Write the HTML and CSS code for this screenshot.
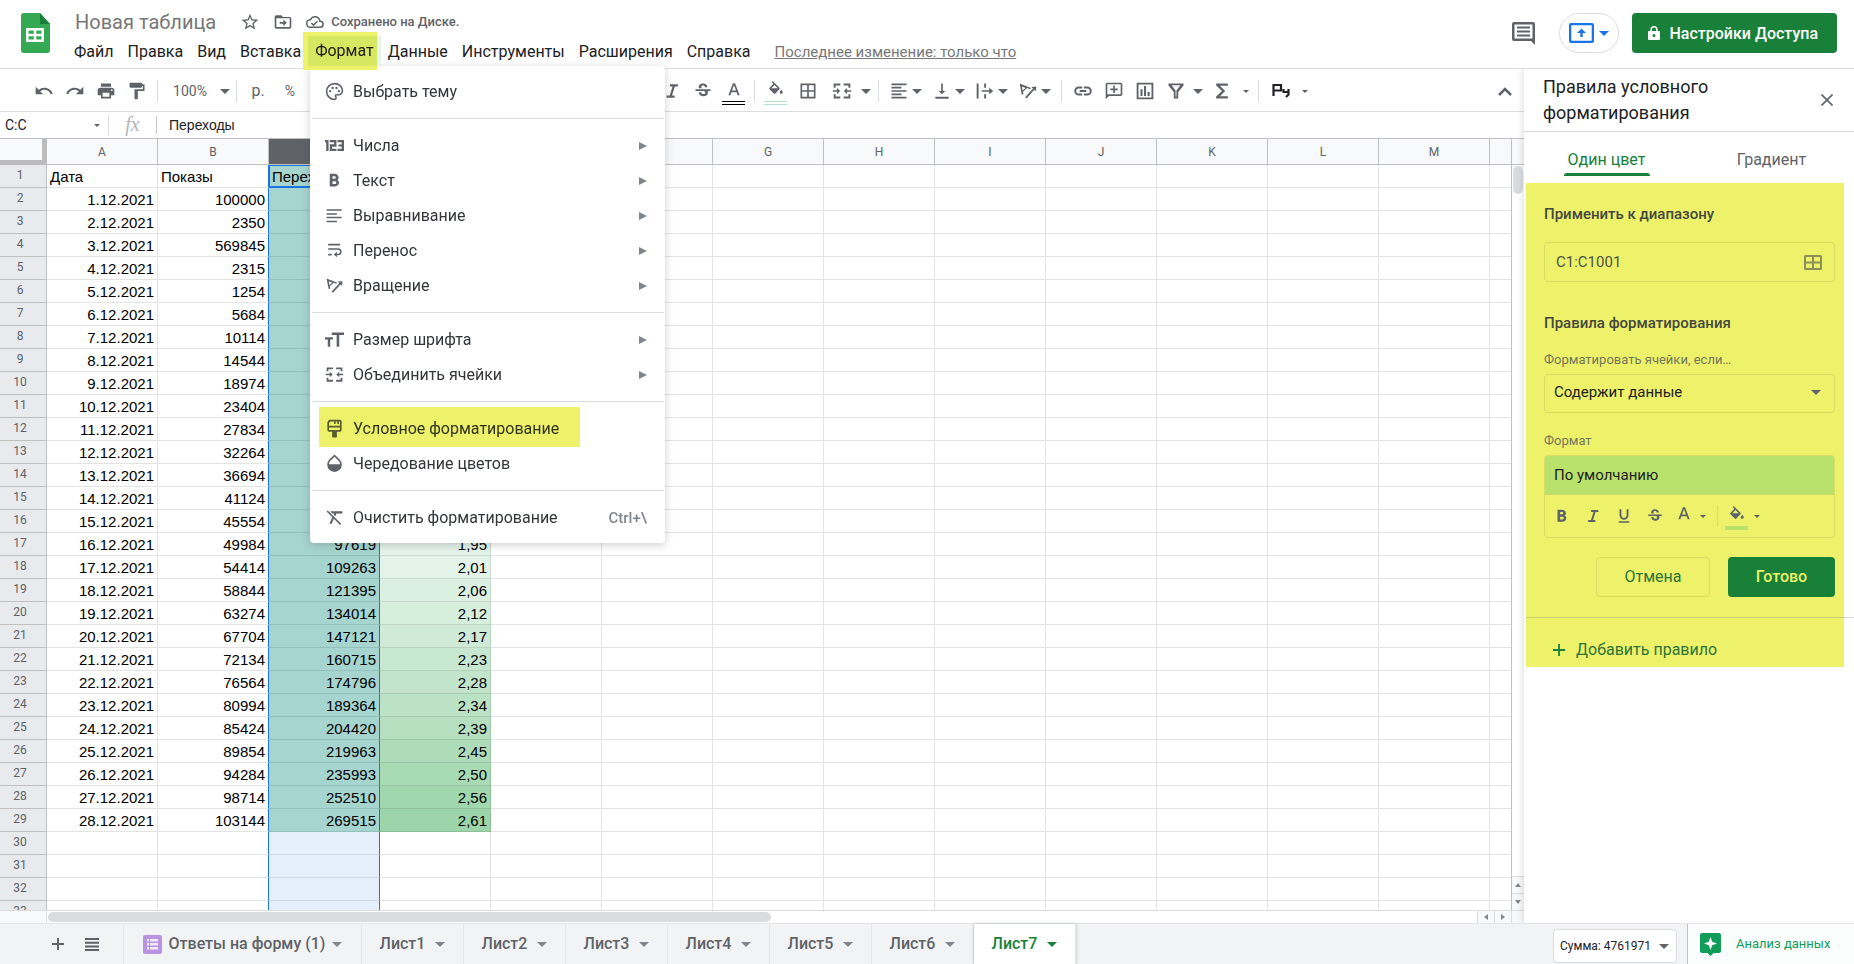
FILE: index.html
```
<!DOCTYPE html>
<html lang="ru">
<head>
<meta charset="utf-8">
<title>Новая таблица</title>
<link rel="stylesheet" href="styles.css">
</head>
<body>
<svg class="sprite" aria-hidden="true">
  <symbol id="caret" viewBox="0 0 10 5"><path d="M0 0h10L5 5z"/></symbol>
  <symbol id="undo" viewBox="0 0 24 24"><path d="M12.500 8c-2.650 0-5.050 1-6.900 2.600L2 7v9h9l-3.620-3.620c1.390-1.160 3.160-1.880 5.120-1.880 3.540 0 6.550 2.310 7.600 5.500l2.370-.78C21.080 11.030 17.150 8 12.500 8z"/></symbol>
  <symbol id="redo" viewBox="0 0 24 24"><path d="M18.400 10.600C16.550 9 14.150 8 11.500 8c-4.650 0-8.580 3.030-9.970 7.220L3.900 16c1.050-3.190 4.060-5.500 7.600-5.500 1.950 0 3.730.72 5.120 1.880L13 16h9V7l-3.600 3.600z"/></symbol>
  <symbol id="print" viewBox="0 0 24 24"><path d="M19 8H5c-1.660 0-3 1.340-3 3v6h4v4h12v-4h4v-6c0-1.660-1.340-3-3-3zm-3 11H8v-5h8v5zm3-7a1 1 0 1 1 0-2 1 1 0 0 1 0 2zM18 3H6v4h12V3z"/></symbol>
  <symbol id="roller" viewBox="0 0 24 24"><path d="M18 4V3c0-.55-.45-1-1-1H4c-.55 0-1 .45-1 1v4c0 .55.45 1 1 1h13c.55 0 1-.45 1-1V6h1v4H9v11c0 .55.45 1 1 1h2c.55 0 1-.45 1-1v-9h8V4h-3z"/></symbol>
  <symbol id="bold" viewBox="0 0 24 24"><path d="M15.600 11.300c.97-.67 1.650-1.770 1.650-2.790C17.250 5.500 14.900 3.500 12 3.500H6v16h6.700c2.700 0 5-2 5-4.600 0-1.600-.8-2.900-2.100-3.600zM9.500 6.500h2.600a1.600 1.600 0 0 1 0 3.200H9.500zM12.600 16.500H9.500V13h3.100a1.750 1.750 0 0 1 0 3.500z"/></symbol>
  <symbol id="italic" viewBox="0 0 24 24"><path d="M9.500 4v2.600h3.200L9.300 17.400H5.500V20h9.600v-2.600h-3.100l3.400-10.800h3.700V4z"/></symbol>
  <symbol id="underline" viewBox="0 0 24 24"><path d="M12 17c3.310 0 6-2.690 6-6V3h-2.500v8c0 1.930-1.570 3.500-3.500 3.500S8.500 12.930 8.500 11V3H6v8c0 3.310 2.690 6 6 6zm-7 2v2h14v-2H5z"/></symbol>
  <symbol id="strike" viewBox="0 0 24 24"><path d="M7.240 8.750c-.26-.48-.39-1.030-.39-1.670 0-1.840 1.650-4.080 5.250-4.080 3.100 0 5.160 1.870 5.160 4.490h-3.010c0-1.350-.8-2.130-2.170-2.130-1.350 0-2.180.7-2.180 1.600 0 .9.600 1.350 1.900 1.750H7.390l-.15.040zM21 12v-2H3v2h9.620c1.500.5 2.250 1 2.250 2.050 0 1-.85 1.650-2.300 1.650-1.700 0-2.560-.8-2.560-2.300H7c0 3.300 2.600 4.800 5.500 4.800 3.200 0 5.400-1.500 5.400-4.200 0-.8-.2-1.450-.4-2H21z"/></symbol>
  <symbol id="letter-a" viewBox="0 0 24 24"><path d="M10.600 3 4.500 19h2.600l1.400-3.900h7L16.900 19h2.600L13.400 3zM9.300 12.800 12 5.500l2.700 7.300z"/></symbol>
  <symbol id="fill" viewBox="0 0 24 24"><path d="M16.560 8.940 7.620 0 6.210 1.410l2.380 2.380-5.150 5.150c-.59.590-.59 1.540 0 2.120l5.500 5.500c.29.290.68.440 1.060.44s.77-.15 1.060-.44l5.500-5.500c.59-.58.59-1.530 0-2.120zM5.800 9.500 10 5.210 14.200 9.500zM19 11.500s-2 2.170-2 3.500a2 2 0 0 0 4 0c0-1.330-2-3.500-2-3.500z"/></symbol>
  <symbol id="borders" viewBox="0 0 24 24"><path d="M3 3v18h18V3zm8 16H5v-6h6zm0-8H5V5h6zm8 8h-6v-6h6zm0-8h-6V5h6z"/></symbol>
  <symbol id="merge" viewBox="0 0 24 24"><path d="M2 3h8v2.300H4.300V8H2zM14 3h8v5h-2.300V5.300H14zM2 16h2.300v2.700H10V21H2zM19.700 16H22v5h-8v-2.300h5.700zM1 11h5V8.500l3.800 3.500L6 15.500V13H1zM23 11h-5V8.500L14.200 12l3.800 3.500V13h5z"/></symbol>
  <symbol id="align" viewBox="0 0 24 24"><path d="M3 3h18v2H3zM3 7h12v2H3zM3 11h18v2H3zM3 15h12v2H3zM3 19h18v2H3z"/></symbol>
  <symbol id="align4" viewBox="0 0 24 24"><path d="M2 4h19v2H2zM2 9h13v2H2zM2 13.500h19v2H2zM2 18.500h13v2H2z"/></symbol>
  <symbol id="valign" viewBox="0 0 24 24"><path d="M16 12h-3V3h-2v9H8l4 4zM4 19v2.200h16V19z"/></symbol>
  <symbol id="overflow" viewBox="0 0 24 24"><path d="M2 3h2.300v18H2zM11 3h2.300v5H11zM11 16h2.300v5H11zM8 11h9V8l5 4-5 4v-3H8z"/></symbol>
  <symbol id="rotate" viewBox="0 0 24 24"><path d="m2 3 2.600 13.500 2-.5-.6-3.200 5-4.400 3 1.500 1.600-1.400zm2.800 3.500L9 8.400l-3.400 3zM22 6.500l-6 .6 2 1.900L8.500 19.500l1.600 1.500 9.500-10.400 1.900 1.800z"/></symbol>
  <symbol id="wrap" viewBox="0 0 24 24"><path d="M4 3.500h15v2.200H4zM4 9h12.500a4 4 0 0 1 0 9H15v2.500L11 17l4-3.500V16h1.500a2 2 0 0 0 0-5H4zM4 16h4.500v2.200H4z"/></symbol>
  <symbol id="link" viewBox="0 0 24 24"><path d="M3.900 12c0-1.710 1.390-3.100 3.100-3.100h4V6.500H7a5.500 5.500 0 0 0 0 11h4v-2.400H7A3.100 3.100 0 0 1 3.900 12zM8 13.100h8v-2.200H8zM17 6.500h-4v2.400h4a3.100 3.100 0 0 1 0 6.200h-4v2.400h4a5.500 5.500 0 0 0 0-11z"/></symbol>
  <symbol id="comment" viewBox="0 0 24 24"><path d="M20 2H4a2 2 0 0 0-2 2v18l4-4h14a2 2 0 0 0 2-2V4a2 2 0 0 0-2-2zm0 14H4V4h16zM11 14.500h2V11h3.500V9H13V5.500h-2V9H7.500v2H11z"/></symbol>
  <symbol id="chart" viewBox="0 0 24 24"><path d="M2 2v20h20V2zm17.800 17.800H4.200V4.200h15.600zM6.500 10H9v8H6.500zM10.800 6h2.500v12h-2.500zM15.100 13h2.500v5h-2.500z"/></symbol>
  <symbol id="filter" viewBox="0 0 24 24"><path d="M3 3v2.300l6.300 8V21h5.400v-7.700l6.300-8V3zm3.800 2.200h10.400L12.500 11.300V18.800h-1v-7.500z"/></symbol>
  <symbol id="sigma" viewBox="0 0 24 24"><path d="M19 3H5v2.300L12 12l-7 6.700V21h14v-2.800H9.500L15.800 12 9.500 5.800H19z"/></symbol>
  <symbol id="star" viewBox="0 0 24 24"><path d="m22 9.240-7.190-.62L12 2 9.190 8.630 2 9.240l5.460 4.730L5.820 21 12 17.270 18.180 21l-1.630-7.030zM12 15.400l-3.760 2.270 1-4.280-3.320-2.880 4.380-.38L12 6.100l1.710 4.040 4.380.38-3.320 2.880 1 4.280z"/></symbol>
  <symbol id="folder" viewBox="0 0 24 24"><path d="M20 6h-8l-2-2H4a2 2 0 0 0-2 2v12a2 2 0 0 0 2 2h16a2 2 0 0 0 2-2V8a2 2 0 0 0-2-2zm0 12H4V7.500h16zM12.500 17l4-4-4-4v3H8v2h4.500z"/></symbol>
  <symbol id="cloud" viewBox="0 0 24 24"><path d="M19.350 10.040A7.490 7.490 0 0 0 5.350 8.040 6 6 0 0 0 6 20h13a5 5 0 0 0 .35-9.960zM19 18H6a4 4 0 0 1-.42-7.980l1.070-.11.500-.95a5.500 5.500 0 0 1 10.240 1.470l.3 1.500 1.530.11A3 3 0 0 1 19 18zm-9-3.180-2.090-2.090L6.500 14.140 10 17.640l6.010-6.010-1.410-1.410z"/></symbol>
  <symbol id="palette" viewBox="0 0 24 24"><path d="M12 1a11 11 0 0 0 0 22c1.700 0 3-1.300 3-3 0-.8-.3-1.400-.7-2-.1-.1-.2-.2-.2-.4 0-.3.300-.6.600-.6H17c3.300 0 6-2.700 6-6C23 5.500 18.100 1 12 1zm5 14h-2.300a2.600 2.600 0 0 0-1.900 4.300c.1.200.2.400.2.700 0 .5-.4 1-1 1a9 9 0 0 1 0-18c5 0 9 3.600 9 8 0 2.200-1.800 4-4 4zM8 11.500a1.500 1.500 0 1 1-3 0 1.500 1.500 0 0 1 3 0zM11 7.500a1.500 1.500 0 1 1-3 0 1.500 1.500 0 0 1 3 0zM16 7.500a1.500 1.500 0 1 1-3 0 1.500 1.500 0 0 1 3 0zM19 11.500a1.500 1.500 0 1 1-3 0 1.500 1.500 0 0 1 3 0z"/></symbol>
  <symbol id="digits" viewBox="0 0 24 24"><path d="M0 5h4.500v14H1.500V8H0zM6 5h8.500v8.500H9V16h5.500v3H6v-8.500h5.500V8H6zM15.800 5H24v14h-8.200v-3H21v-2.700h-4v-2.600h4V8h-5.200z"/></symbol>
  <symbol id="size" viewBox="0 0 24 24"><path d="M8.500 3H24v3.200h-6V21h-3.300V6.200H8.500zM0 9h10v3H6.600v9H3.500v-9H0z"/></symbol>
  <symbol id="brush" viewBox="0 0 24 24"><path d="M5 1h14a2 2 0 0 1 2 2v11a2 2 0 0 1-2 2h-4v6a1.500 1.500 0 0 1-1.500 1.500h-3A1.500 1.500 0 0 1 9 22v-6H5a2 2 0 0 1-2-2V4zm.2 3.800v3.700h13.600V3.200h-1.300v3h-2v-3h-2v3h-2v-3H6.800zm0 5.900v3.100h13.600v-3.100z"/></symbol>
  <symbol id="drop" viewBox="0 0 24 24"><path d="M18.500 7 12 .5 5.500 7a9.200 9.200 0 1 0 13 0zM5 13c0-1.900.7-3.100 2-4.400l5-5 5 5c1.300 1.300 2 2.500 2 4.400z"/></symbol>
  <symbol id="clear" viewBox="0 0 24 24"><path d="M3.500 3 2 4.500l7.200 7.200L5.500 20h3l2.600-6.300L19 21.500l1.500-1.500zM6.500 4v.2L9.300 7h2.200l-.6 1.600 2 2L14.500 7H22V4z"/></symbol>
</svg>

<header class="topbar">
  <svg class="logo" viewBox="0 0 29 40" aria-hidden="true"><path fill="#34a853" d="M3 0h16l10 11v26a3 3 0 0 1-3 3H3a3 3 0 0 1-3-3V3a3 3 0 0 1 3-3z"/><path fill="#188038" d="M19 0l10 11H19z"/><path fill="#fff" d="M5 15h18v14H5zm2.500 2.500v3.300h5.300v-3.300zm7.800 0v3.300h5.200v-3.300zm-7.800 5.700v3.300h5.300v-3.300zm7.800 0v3.300h5.200v-3.300z"/></svg>
  <div class="doc">
    <div class="doc-title">
      <h1>Новая таблица</h1>
      <button aria-label="Пометить"><svg class="icon"><use href="#star"/></svg></button>
      <button aria-label="Переместить"><svg class="icon"><use href="#folder"/></svg></button>
      <span class="saved"><svg class="icon"><use href="#cloud"/></svg>Сохранено на Диске.</span>
    </div>
    <nav class="menubar">
      <button>Файл</button><button>Правка</button><button>Вид</button><button>Вставка</button><button class="open">Формат</button><button>Данные</button><button>Инструменты</button><button>Расширения</button><button>Справка</button>
      <a href="#history">Последнее изменение: только что</a>
    </nav>
  </div>
  <div class="actions">
    <button aria-label="История комментариев"><svg width="23" height="23" viewBox="0 0 23 23" fill="#5f6368"><path d="M2 0h19a2 2 0 0 1 2 2v21l-4-4H2a2 2 0 0 1-2-2V2a2 2 0 0 1 2-2zm.5 2.500v14h18v-14zM5 4.500h13v2H5zM5 8.500h13v2H5zM5 12.500h13v2H5z"/></svg></button>
    <button class="present" aria-label="Презентация"><svg width="25" height="20" viewBox="0 0 25 20" fill="#1a73e8"><path d="M2 0h21a2 2 0 0 1 2 2v16a2 2 0 0 1-2 2H2a2 2 0 0 1-2-2V2a2 2 0 0 1 2-2zm.3 2.300v15.400h20.400V2.300zM12.500 5.500l4.500 4.500h-3.300v4h-2.400v-4H8z"/></svg><svg class="caret blue"><use href="#caret"/></svg></button>
    <button class="share"><svg width="12" height="14" viewBox="0 0 12 14" fill="#fff"><path d="M6 0a3.600 3.600 0 0 1 3.600 3.600V5H11a1 1 0 0 1 1 1v7a1 1 0 0 1-1 1H1a1 1 0 0 1-1-1V6a1 1 0 0 1 1-1h1.400V3.600A3.600 3.600 0 0 1 6 0zm0 1.500c-1.200 0-2.100.9-2.100 2.100V5h4.200V3.600c0-1.200-.9-2.100-2.100-2.100zM6 8a1.500 1.500 0 1 0 0 3 1.500 1.500 0 0 0 0-3z"/></svg>Настройки Доступа</button>
  </div>
</header>

<div class="workspace">
  <main class="editor">
    <div class="toolbar">
      <button aria-label="Отменить"><svg class="icon"><use href="#undo"/></svg></button>
      <button aria-label="Повторить"><svg class="icon"><use href="#redo"/></svg></button>
      <button aria-label="Печать"><svg class="icon"><use href="#print"/></svg></button>
      <button aria-label="Копировать форматирование"><svg class="icon"><use href="#roller"/></svg></button>
      <i class="sep"></i>
      <button class="zoom">100%<svg class="caret"><use href="#caret"/></svg></button>
      <i class="sep"></i>
      <button class="unit">р.</button>
      <button class="unit percent">%</button>
      <span class="covered"></span>
      <button aria-label="Курсив"><svg class="icon"><use href="#italic"/></svg></button>
      <button aria-label="Зачеркнутый"><svg class="icon"><use href="#strike"/></svg></button>
      <button class="colored" aria-label="Цвет текста"><svg class="icon"><use href="#letter-a"/></svg><i class="swatch black"></i></button>
      <i class="sep"></i>
      <button class="colored" aria-label="Цвет заливки"><svg class="icon"><use href="#fill"/></svg><i class="swatch mint"></i></button>
      <button class="roomy" aria-label="Границы"><svg class="icon"><use href="#borders"/></svg></button>
      <button class="roomy" aria-label="Объединить"><svg class="icon"><use href="#merge"/></svg></button>
      <button class="drop" aria-label="Тип объединения"><svg class="caret"><use href="#caret"/></svg></button>
      <i class="sep"></i>
      <button class="pair" aria-label="По горизонтали"><svg class="icon"><use href="#align"/></svg><svg class="caret"><use href="#caret"/></svg></button>
      <button class="pair" aria-label="По вертикали"><svg class="icon"><use href="#valign"/></svg><svg class="caret"><use href="#caret"/></svg></button>
      <button class="pair" aria-label="Перенос текста"><svg class="icon"><use href="#overflow"/></svg><svg class="caret"><use href="#caret"/></svg></button>
      <button class="pair" aria-label="Поворот текста"><svg class="icon"><use href="#rotate"/></svg><svg class="caret"><use href="#caret"/></svg></button>
      <i class="sep"></i>
      <button aria-label="Ссылка"><svg class="icon"><use href="#link"/></svg></button>
      <button aria-label="Комментарий"><svg class="icon"><use href="#comment"/></svg></button>
      <button aria-label="Диаграмма"><svg class="icon"><use href="#chart"/></svg></button>
      <button aria-label="Фильтр"><svg class="icon"><use href="#filter"/></svg></button>
      <button class="drop" aria-label="Фильтры"><svg class="caret"><use href="#caret"/></svg></button>
      <button class="roomy" aria-label="Функции"><svg class="icon"><use href="#sigma"/></svg></button>
      <button class="drop" aria-label="Список функций"><svg class="caret small"><use href="#caret"/></svg></button>
      <i class="sep"></i>
      <button class="roomy" aria-label="Способ ввода"><svg width="18" height="16" viewBox="0 0 18 16" fill="none" stroke="#202124" stroke-width="2.200"><path d="M1.500 13V2h7.500v5.500H1.500M11.500 6v3h5M16.500 6v5.500l-2.500 2.500"/></svg></button>
      <button class="drop" aria-label="Язык ввода"><svg class="caret small"><use href="#caret"/></svg></button>
      <button class="collapse" aria-label="Скрыть меню"><svg width="14" height="9" viewBox="0 0 14 9" fill="none" stroke="#5f6368" stroke-width="2.500"><path d="M1 8l6-6 6 6"/></svg></button>
    </div>
    <div class="formula">
      <button class="namebox">C:C<svg class="caret small"><use href="#caret"/></svg></button>
      <span class="fx">fx</span>
      <input aria-label="Формула" value="Переходы">
    </div>
    <div class="sheet">
      <div class="viewport"><table class="grid" id="grid"></table></div>
      <div class="vscroll">
        <i class="cap"></i><div class="track"><i class="thumb"></i></div>
        <button aria-label="Вверх"><svg width="6" height="4"><path d="M0 4h6L3 0z"/></svg></button>
        <button aria-label="Вниз"><svg width="6" height="4"><path d="M0 0h6L3 4z"/></svg></button>
      </div>
      <div class="hscroll">
        <i class="cap"></i><div class="track"><i class="thumb"></i></div>
        <button aria-label="Влево"><svg width="4" height="6"><path d="M4 0v6L0 3z"/></svg></button>
        <button aria-label="Вправо"><svg width="4" height="6"><path d="M0 0v6l4-3z"/></svg></button>
      </div>
      <i class="corner"></i>
    </div>
  </main>

  <aside class="panel">
    <div class="panel-head">
      <h2>Правила условного форматирования</h2>
      <button aria-label="Закрыть"><svg width="12" height="12" viewBox="0 0 12 12" stroke="#5f6368" stroke-width="1.600"><path d="M.5.500l11 11M11.500.500l-11 11"/></svg></button>
    </div>
    <div class="panel-tabs">
      <button class="active">Один цвет</button>
      <button>Градиент</button>
    </div>
    <form class="rules">
      <div class="fields">
        <label class="heading" for="range">Применить к диапазону</label>
        <div class="range"><input id="range" value="C1:C1001"><svg width="18" height="15" viewBox="0 0 18 15"><path fill="#8d905a" d="M1.500 0h15A1.500 1.500 0 0 1 18 1.500v12a1.500 1.500 0 0 1-1.500 1.500h-15A1.500 1.500 0 0 1 0 13.500v-12A1.500 1.500 0 0 1 1.500 0zM2 2v4.500h6V2zm8 0v4.500h6V2zM2 8.500V13h6V8.500zm8 0V13h6V8.500z"/></svg></div>
        <h3 class="heading">Правила форматирования</h3>
        <label class="caption" for="condition">Форматировать ячейки, если…</label>
        <div class="condition"><select id="condition"><option>Содержит данные</option></select><svg class="caret"><use href="#caret"/></svg></div>
        <span class="caption format-caption">Формат</span>
        <div class="format">
          <button type="button" class="preview">По умолчанию</button>
          <div class="format-tools">
            <button type="button" aria-label="Полужирный"><svg class="icon"><use href="#bold"/></svg></button>
            <button type="button" aria-label="Курсив"><svg class="icon"><use href="#italic"/></svg></button>
            <button type="button" aria-label="Подчеркнутый"><svg class="icon"><use href="#underline"/></svg></button>
            <button type="button" aria-label="Зачеркнутый"><svg class="icon"><use href="#strike"/></svg></button>
            <button type="button" class="lifted" aria-label="Цвет текста"><svg class="icon"><use href="#letter-a"/></svg></button>
            <svg class="caret small"><use href="#caret"/></svg>
            <i class="sep"></i>
            <button type="button" class="colored" aria-label="Цвет заливки"><svg class="icon"><use href="#fill"/></svg><i class="swatch lime"></i></button>
            <svg class="caret small"><use href="#caret"/></svg>
          </div>
        </div>
        <div class="buttons"><button type="button" class="cancel">Отмена</button><button type="button" class="done">Готово</button></div>
      </div>
      <button type="button" class="add"><svg width="12" height="12" viewBox="0 0 12 12" stroke="#188038" stroke-width="1.800"><path d="M6 0v12M0 6h12"/></svg>Добавить правило</button>
    </form>
  </aside>
</div>

<footer class="tabs">
  <div class="tab-tools">
    <button aria-label="Добавить лист"><svg width="12" height="12" viewBox="0 0 12 12" stroke="#5f6368" stroke-width="2"><path d="M6 0v12M0 6h12"/></svg></button>
    <button aria-label="Все листы"><svg width="14" height="13" viewBox="0 0 14 13" fill="#5f6368"><path d="M0 0h14v2H0zM0 3.700h14v2H0zM0 7.400h14v2H0zM0 11h14v2H0z"/></svg></button>
  </div>
  <button class="tab form-tab"><svg width="19" height="19" viewBox="0 0 19 19"><rect width="19" height="19" rx="2" fill="#b992e2"/><path fill="#f4ecfb" d="M4 4h2v2.500H4zM7 4h8v2.500H7zM4 8h2v2.500H4zM7 8h8v2.500H7zM4 12h2v2.500H4zM7 12h8v2.500H7z"/></svg>Ответы на форму (1)<svg class="caret"><use href="#caret"/></svg></button>
  <button class="tab">Лист1<svg class="caret"><use href="#caret"/></svg></button>
  <button class="tab">Лист2<svg class="caret"><use href="#caret"/></svg></button>
  <button class="tab">Лист3<svg class="caret"><use href="#caret"/></svg></button>
  <button class="tab">Лист4<svg class="caret"><use href="#caret"/></svg></button>
  <button class="tab">Лист5<svg class="caret"><use href="#caret"/></svg></button>
  <button class="tab">Лист6<svg class="caret"><use href="#caret"/></svg></button>
  <button class="tab current">Лист7<svg class="caret"><use href="#caret"/></svg></button>
  <div class="sum"><select aria-label="Итог"><option>Сумма: 4761971</option></select><svg class="caret"><use href="#caret"/></svg></div>
  <button class="explore"><svg width="21" height="23" viewBox="0 0 21 23"><path fill="#0f9d58" d="M2 0h17a2 2 0 0 1 2 2v16a2 2 0 0 1-2 2h-5.500l-3 3-3-3H2a2 2 0 0 1-2-2V2a2 2 0 0 1 2-2z"/><path fill="#fff" d="M10.500 4l1.700 4.800 4.800 1.700-4.800 1.700-1.700 4.800-1.700-4.800L4 10.500l4.800-1.700z"/></svg>Анализ данных</button>
</footer>

<div class="menu" role="menu">
  <button><svg class="icon"><use href="#palette"/></svg>Выбрать тему</button>
  <hr>
  <button><svg class="icon"><use href="#digits"/></svg>Числа<svg class="more" viewBox="0 0 8 8"><path d="M0 0l8 4-8 4z"/></svg></button>
  <button><svg class="icon"><use href="#bold"/></svg>Текст<svg class="more" viewBox="0 0 8 8"><path d="M0 0l8 4-8 4z"/></svg></button>
  <button><svg class="icon"><use href="#align4"/></svg>Выравнивание<svg class="more" viewBox="0 0 8 8"><path d="M0 0l8 4-8 4z"/></svg></button>
  <button><svg class="icon"><use href="#wrap"/></svg>Перенос<svg class="more" viewBox="0 0 8 8"><path d="M0 0l8 4-8 4z"/></svg></button>
  <button><svg class="icon"><use href="#rotate"/></svg>Вращение<svg class="more" viewBox="0 0 8 8"><path d="M0 0l8 4-8 4z"/></svg></button>
  <hr>
  <button><svg class="icon"><use href="#size"/></svg>Размер шрифта<svg class="more" viewBox="0 0 8 8"><path d="M0 0l8 4-8 4z"/></svg></button>
  <button><svg class="icon"><use href="#merge"/></svg>Объединить ячейки<svg class="more" viewBox="0 0 8 8"><path d="M0 0l8 4-8 4z"/></svg></button>
  <hr>
  <button class="marked"><svg class="icon"><use href="#brush"/></svg>Условное форматирование</button>
  <button><svg class="icon"><use href="#drop"/></svg>Чередование цветов</button>
  <hr>
  <button><svg class="icon"><use href="#clear"/></svg>Очистить форматирование<kbd>Ctrl+\</kbd></button>
</div>
<script src="grid.js"></script>
</body>
</html>
```

FILE: styles.css
```
* { box-sizing: border-box; }
body {
  margin: 0;
  height: 100vh;
  display: flex;
  flex-direction: column;
  overflow: hidden;
  position: relative;
  background: #fff;
  color: #202124;
  font: 15px/20px Roboto, "Noto Sans", sans-serif;
}
button, input, select { font: inherit; color: inherit; border: 0; padding: 0; margin: 0; background: none; }
button { display: flex; align-items: center; justify-content: center; white-space: nowrap; flex: none; }
h1, h2, h3 { margin: 0; font-weight: 400; }
svg { flex: none; display: block; }
.sprite { position: absolute; width: 0; height: 0; }
.icon { width: 20px; height: 20px; fill: #5f6368; }
.caret { width: 10px; height: 5px; fill: #5f6368; }
.caret.small { width: 6px; height: 3px; }
.caret.blue { fill: #1a73e8; }
.sep { flex: none; width: 1px; height: 22px; margin: 0 5px; background: #dadce0; }

/* Top bar */
.topbar { flex: none; display: flex; height: 69px; border-bottom: 1px solid #dadce0; }
.logo { width: 29px; height: 40px; margin: 13px 17px 0 21px; }
.doc { padding-top: 7px; }
.doc-title { display: flex; align-items: center; height: 29px; padding-left: 8px; color: #5f6368; }
.doc-title h1 { font-size: 20px; color: #777; margin-right: 24px; }
.doc-title button { margin-right: 13px; }
.saved { display: flex; align-items: center; gap: 7px; font-size: 13px; font-weight: 500; }
.saved .icon { width: 18px; height: 18px; }
.menubar { display: flex; height: 32px; font-size: 16px; }
.menubar button { padding: 0 7px; height: 32px; }
.menubar .open { position: relative; height: 30px; background: #e6f4ea; z-index: 3; }
.menubar .open::after {
  content: "";
  position: absolute;
  inset: -4px 4px -4px -5px;
  background: #eef26b;
  mix-blend-mode: multiply;
}
.menubar a { margin-left: 17px; font-size: 15px; line-height: 32px; color: #777; }
.actions { margin: 13px 17px 0 auto; display: flex; align-items: flex-start; }
.actions > button { height: 40px; }
.present { width: 60px; margin: 0 13px 0 24px; gap: 5px; border: 1px solid #dadce0; border-radius: 20px; }
.share { gap: 10px; padding: 0 19px 0 16px; border-radius: 4px; background: #188038; color: #fff; font: 500 16px Roboto, sans-serif; }

/* Editor */
.workspace { flex: 1; min-height: 0; display: flex; }
.editor { flex: 1; min-width: 0; display: flex; flex-direction: column; }
.toolbar { flex: none; display: flex; align-items: center; height: 43px; padding: 2px 4px 0 28px; border-bottom: 1px solid #dadce0; color: #5f6368; }
.toolbar button { width: 31px; height: 30px; }
.toolbar .zoom { width: 68px; padding-left: 9px; gap: 13px; font-size: 14px; }
.toolbar .unit { width: 32px; font-size: 16px; }
.toolbar .percent { font-size: 14px; }
.covered { flex: none; width: 350px; }
.toolbar .roomy { width: 34px; }
.toolbar .drop { width: 14px; }
.toolbar .pair { width: 43px; gap: 3px; }
.toolbar .collapse { margin-left: auto; }
.colored { flex-direction: column; gap: 2px; padding-top: 3px; }
.colored .icon { width: 18px; height: 18px; }
.swatch { width: 23px; height: 4px; }
.swatch.black { border: solid #000; border-width: 1px 0; }
.swatch.mint { border: solid #b7e1cd; border-width: 1px 0; }
.swatch.lime { background: #b9e26c; }
.formula { flex: none; display: flex; align-items: center; height: 27px; border-bottom: 1px solid #c0c0c0; font-size: 14px; }
.namebox { width: 109px; height: 20px; padding: 0 8px 0 5px; justify-content: space-between; border-right: 1px solid #dadce0; }
.fx { width: 48px; height: 18px; text-align: center; border-right: 1px solid #c8c8c8; color: #b5b5b5; font: italic 20px/16px "Liberation Serif", serif; }
.formula input { flex: 1; padding-left: 12px; font: 14px "Liberation Sans", sans-serif; }

.sheet { flex: 1; min-height: 0; display: grid; grid-template: minmax(0, 1fr) 13px / minmax(0, 1fr) 13px; }
.viewport { overflow: hidden; }
.grid { table-layout: fixed; width: 1823px; border-collapse: separate; border-spacing: 0; font: 15px/16px "Liberation Sans", Arial, sans-serif; color: #000; }
.grid th, .grid td { height: 23px; padding: 0 3px; overflow: hidden; white-space: nowrap; border: solid #e2e3e3; border-width: 0 1px 1px 0; }
.grid th { font: 12px/14px Roboto, sans-serif; color: #5f6368; }
.grid thead th { height: 26px; width: 111px; background: #f8f9fa; border-color: #c0c0c0; }
.grid thead th:first-child { width: 47px; border: solid #bcbcbc; border-width: 0 5px 5px 0; }
.grid thead .selected { background: #5f6368; }
.grid tbody th { background: #e8eaed; border-color: #c0c0c0; padding: 0 6px 2px 0; }
.grid tbody td { text-align: right; padding-top: 2px; }
.grid tbody td.text { text-align: left; }
.grid tbody .before { border-right-color: #1a73e8; }
.grid tbody .picked { background: #e6f0fc; border-color: #1a73e8; border-bottom-color: #cfd9e3; }
.grid tbody .filled { background: #a6d4cf; border-bottom-color: #92c1bc; }
.grid tbody .active { box-shadow: inset 1px 1px #1a73e8, inset 0 -1px #1a73e8; border-bottom-color: #1a73e8; }
.grid tbody .rated { border-color: rgba(0, 0, 0, .1); }
.vscroll { display: flex; flex-direction: column; border-left: 1px solid #c0c0c0; }
.vscroll .cap { height: 26px; background: #f8f9fa; border-bottom: 1px solid #c0c0c0; }
.track { flex: 1; min-width: 0; padding: 1px; }
.thumb { display: block; border-radius: 5px; background: #dadce0; }
.vscroll .thumb { height: 28px; width: 10px; }
.vscroll button { height: 17px; background: #f8f9fa; border-top: 1px solid #dadce0; fill: #80868b; }
.hscroll { display: flex; border-top: 1px solid #dadce0; }
.hscroll .cap { width: 47px; background: #f8f9fa; border-right: 1px solid #dadce0; }
.hscroll .thumb { height: 10px; width: 50.6%; }
.hscroll button { width: 17px; background: #f8f9fa; border-left: 1px solid #dadce0; fill: #80868b; }
.corner { background: #f8f9fa; border: solid #dadce0; border-width: 1px 0 0 1px; }

/* Side panel */
.panel { flex: none; width: 330px; box-shadow: -2px 0 6px rgba(60, 64, 67, .15); z-index: 1; background: #fff; clip-path: inset(0 0 0 -10px); }
.panel-head { display: flex; align-items: center; justify-content: space-between; padding: 5px 21px 5px 19px; border-bottom: 1px solid #dadce0; }
.panel-head h2 { width: 200px; font-size: 18px; line-height: 26px; }
.panel-tabs { display: flex; height: 51px; color: #5f6368; font-size: 16px; }
.panel-tabs button { flex: 1; padding-top: 4px; }
.panel-tabs .active { position: relative; color: #188038; }
.panel-tabs .active::after { content: ""; position: absolute; bottom: 7px; width: 86px; height: 3px; border-radius: 3px 3px 0 0; background: #188038; }
.rules { margin: 0 10px 0 2px; background: #eef26b; }
.fields { margin-right: -10px; padding: 20px 19px 20px 18px; border-bottom: 1px solid rgba(95, 99, 104, .25); }
.heading { display: block; height: 22px; line-height: 22px; font-size: 15px; font-weight: 500; color: #45483f; }
.range { display: flex; align-items: center; height: 40px; margin: 17px 0 30px; padding: 0 12px 0 11px; border: 1px solid #d9dc66; border-radius: 4px; color: #4f5244; }
.range input { flex: 1; min-width: 0; }
.caption { display: block; margin-top: 16px; line-height: 20px; font-size: 13px; color: #74775a; }
.condition, .sum { position: relative; }
.condition { height: 39px; margin-top: 4px; border: 1px solid #d9dc66; border-radius: 4px; }
.condition select { appearance: none; width: 100%; height: 100%; padding: 0 9px 3px; }
.condition .caret { position: absolute; right: 13px; top: 15px; }
.format-caption { margin-top: 18px; }
.format { margin-top: 4px; border: 1px solid #d9dc66; border-radius: 4px; overflow: hidden; }
.preview { width: 100%; height: 39px; justify-content: flex-start; padding-left: 9px; background: #b9e26c; border-bottom: 1px solid #cbd968; }
.format-tools { display: flex; align-items: center; height: 42px; padding-left: 1px; }
.format-tools button { width: 31px; height: 32px; }
.format-tools .icon { width: 18px; height: 18px; }
.format-tools .lifted { width: 28px; padding-bottom: 4px; }
.format-tools .sep { margin: 0 3px 0 11px; background: #d9dc66; }
.format-tools .caret { margin-left: 2px; }
.buttons { display: flex; justify-content: flex-end; gap: 18px; margin-top: 19px; }
.buttons button { height: 40px; border-radius: 4px; font-size: 16px; }
.buttons .cancel { width: 114px; border: 1px solid #d9dc66; color: #2c7438; }
.buttons .done { width: 107px; background: #188038; color: #eef26b; font-weight: 500; }
.add { height: 49px; padding: 14px 0 0 27px; gap: 11px; color: #2c7438; font-size: 16px; }

/* Sheet tabs */
.tabs { flex: none; display: flex; height: 41px; border-top: 1px solid #e3e5e8; background: #f1f3f4; color: #5f6368; }
.tab-tools { display: flex; gap: 21px; width: 124px; padding-left: 52px; border-right: 1px solid #e3e5e8; }
.tab { min-width: 102px; gap: 10px; border-right: 1px solid #e3e5e8; font-size: 16px; font-weight: 500; }
.tab .caret { fill: #80868b; }
.form-tab { width: 238px; gap: 7px; }
.current { background: #fff; color: #188038; box-shadow: 0 0 3px rgba(60, 64, 67, .3); }
.current .caret { fill: #188038; }
.sum { width: 124px; height: 34px; margin: 5px 10px 0 auto; border: 1px solid #dadce0; border-radius: 4px; background: #fff; color: #202124; font-size: 12px; }
.sum select { appearance: none; width: 100%; height: 100%; padding-left: 6px; }
.sum .caret { position: absolute; right: 7px; top: 14px; }
.explore { width: 167px; padding: 0 22px 0 12px; justify-content: flex-start; gap: 15px; border-left: 1px solid #bdc1c6; background: #fbfefd; color: #0f9d58; font-size: 13px; }

/* Format menu, lies over the sheet */
.menu {
  position: absolute;
  left: 310px;
  top: 66px;
  width: 355px;
  padding: 8px 0;
  border-radius: 0 4px 4px 4px;
  background: #fff;
  box-shadow: 0 2px 8px rgba(60, 64, 67, .25);
  z-index: 2;
}
.menu button { position: relative; width: 100%; height: 35px; padding: 0 18px 0 15px; gap: 9px; justify-content: flex-start; font-size: 16px; color: #333639; }
.menu .icon { width: 19px; height: 19px; }
.menu hr { height: 1px; margin: 9px 1px 9px 2px; border: 0; background: #dadce0; }
.more { width: 8px; height: 8px; margin-left: auto; fill: #80868b; }
.menu kbd { margin-left: auto; font: 500 15px Roboto, sans-serif; color: #80868b; }
.menu .marked::before { content: ""; position: absolute; inset: -4px 85px -1px 9px; background: #eef26b; mix-blend-mode: multiply; }
```

FILE: grid.js
```
const columns = [..."ABCDEFGHIJKLM", "", "", ""];
const views = [100000, 2350, 569845, 2315, 1254, 5684];
const clicks = [97619, 109263, 121395, 134014, 147121, 160715, 174796, 189364, 204420, 219963, 235993, 252510, 269515];
const ratios = ["1,95", "2,01", "2,06", "2,12", "2,17", "2,23", "2,28", "2,34", "2,39", "2,45", "2,50", "2,56", "2,61"];
const shades = ["#e4f4ea", "#e3f3e8", "#dcf0e2", "#d6eedc", "#cfead7", "#c8e7d0", "#c2e4ca", "#bbe2c4", "#b5dfbf", "#aedcb8", "#a8dab3", "#a1d7ad", "#9cd5a9"];
const firstRated = 17;
const lastFilled = 29;

function cell(row, column) {
  const td = document.createElement("td");
  const data = row <= lastFilled;
  if (column === 0 && data) td.textContent = row === 1 ? "Дата" : `${row - 1}.12.2021`;
  if (column === 1) {
    td.classList.add("before");
    if (data) td.textContent = row === 1 ? "Показы" : views[row - 2] || 5684 + 4430 * (row - 7);
  }
  if (column === 2) {
    td.classList.add("picked");
    if (data) td.classList.add("filled");
    if (row === 1) {
      td.classList.add("active");
      td.textContent = "Переходы";
    }
    if (data && row >= firstRated) td.textContent = clicks[row - firstRated];
  }
  if (column === 3 && data && row >= firstRated) {
    td.classList.add("rated");
    td.style.backgroundColor = shades[row - firstRated];
    td.textContent = ratios[row - firstRated];
  }
  if (row === 1) td.classList.add("text");
  return td;
}

const table = document.getElementById("grid");
const head = table.createTHead().insertRow();
head.append(document.createElement("th"));
for (const name of columns) {
  const th = document.createElement("th");
  th.textContent = name;
  if (name === "C") th.className = "selected";
  head.append(th);
}
const body = table.createTBody();
for (let row = 1; row <= 33; row++) {
  const tr = body.insertRow();
  const th = document.createElement("th");
  th.textContent = row;
  tr.append(th, ...columns.map((_, i) => cell(row, i)));
}
```
